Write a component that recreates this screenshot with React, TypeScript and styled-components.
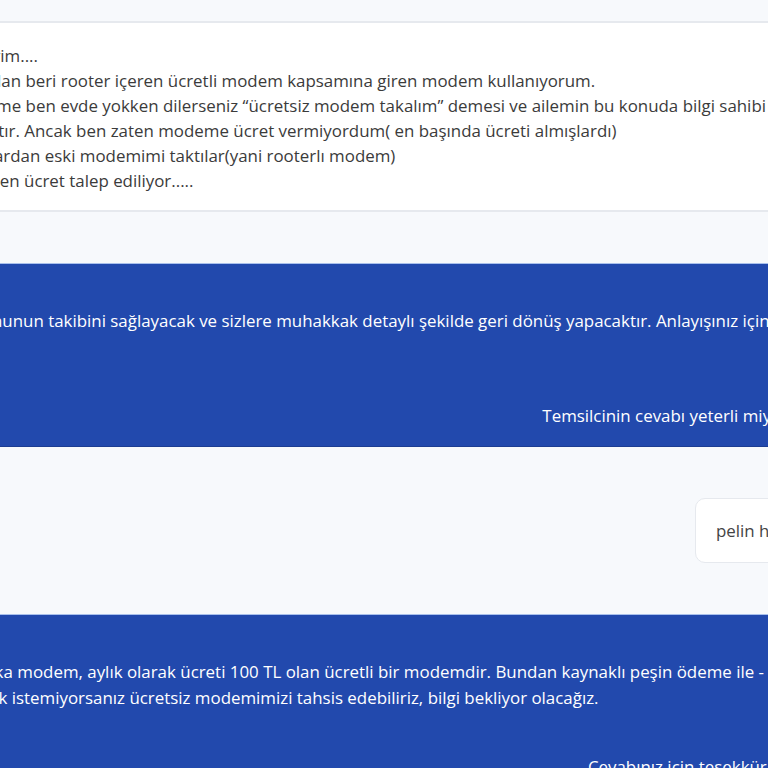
import styled, { createGlobalStyle } from 'styled-components';

const GlobalStyle = createGlobalStyle`
  html, body {
    margin: 0;
    padding: 0;
    background: #f7f9fc;
    overflow: hidden;
  }
  body {
    font-family: 'Open Sans', 'Noto Sans', sans-serif;
    font-size: 16.9px;
    color: #3b3b3b;
  }
`;

// the conversation column is wider than the window and starts left of it
const Thread = styled.div`
  width: 1279px;
  margin-left: -279px;
  padding-top: 21px;
  display: flex;
  flex-direction: column;
  gap: 51px;
`;

const CustomerCard = styled.div`
  background: #ffffff;
  border-top: 2px solid #e6e9ee;
  border-bottom: 2px solid #e6e9ee;
  padding: 20px 0 17px;
  line-height: 25px;
  color: #3b3b3b;
`;

const Line = styled.div`
  white-space: nowrap;
`;

const AgentBubble = styled.div`
  background: #2249ad;
  color: #ffffff;
  border-top: 1px solid #a9c0ec;
  border-bottom: 1px solid #1c3d92;
  padding: 44px 0 17px;
  line-height: 26px;
`;

const Footer = styled.div<{ $inset: number }>`
  display: flex;
  justify-content: flex-end;
  margin-top: 43px;
  padding-right: ${(p) => p.$inset}px;
  white-space: nowrap;
`;

const ReplyRow = styled.div<{ $inset: number }>`
  display: flex;
  justify-content: flex-end;
  padding-right: ${(p) => p.$inset}px;
`;

const ReplyChip = styled.div`
  background: #ffffff;
  border: 1px solid #e6e9ee;
  border-radius: 10px;
  padding: 19px 20px;
  line-height: 25px;
  color: #444;
  white-space: nowrap;
`;

const customerLines = [
  'Merhaba, yardımcı olursanız sevinirim....',
  'Yaklaşık üç yıldır, yani uzun zamandan beri rooter içeren ücretli modem kapsamına giren modem kullanıyorum.',
  'Geçen hafta evime gelen ekip anneme ben evde yokken dilerseniz “ücretsiz modem takalım” demesi ve ailemin bu konuda bilgi sahibi',
  'olmadığından, modem değiştirilmiştır. Ancak ben zaten modeme ücret vermiyordum( en başında ücreti almışlardı)',
  'Daha sonra durumu anlayınca tekrardan eski modemimi taktılar(yani rooterlı modem)',
  'Şimdi ise bu durum nedeniyle benden ücret talep ediliyor.....',
];

const App = () => {
  return (
    <>
      <GlobalStyle />
      <Thread>
        <CustomerCard>
          {customerLines.map((l) => (
            <Line key={l}>{l}</Line>
          ))}
        </CustomerCard>

        <AgentBubble>
          <Line>
            Talebiniz alınmış olup birimimiz konunun takibini sağlayacak ve sizlere muhakkak detaylı şekilde geri dönüş yapacaktır. Anlayışınız için teşekkür ederiz.
          </Line>
          <Line>İyi günler dileriz.</Line>
          <Footer $inset={207}>Temsilcinin cevabı yeterli miydi?</Footer>
        </AgentBubble>

        <ReplyRow $inset={170}>
          <ReplyChip>pelin hanım</ReplyChip>
        </ReplyRow>

        <AgentBubble>
          <Line>
            Değerli Pelin Hanım evinizdeki marka modem, aylık olarak ücreti 100 TL olan ücretli bir modemdir. Bundan kaynaklı peşin ödeme ile - taksitli ödeme seçenekleri mevcuttur.
          </Line>
          <Line>
            ile devam edebilirsiniz. Eğer ödemek istemiyorsanız ücretsiz modemimizi tahsis edebiliriz, bilgi bekliyor olacağız.
          </Line>
          <Footer $inset={176}>Cevabınız için teşekkür ederiz.</Footer>
        </AgentBubble>
      </Thread>
    </>
  );
};

export default App;
